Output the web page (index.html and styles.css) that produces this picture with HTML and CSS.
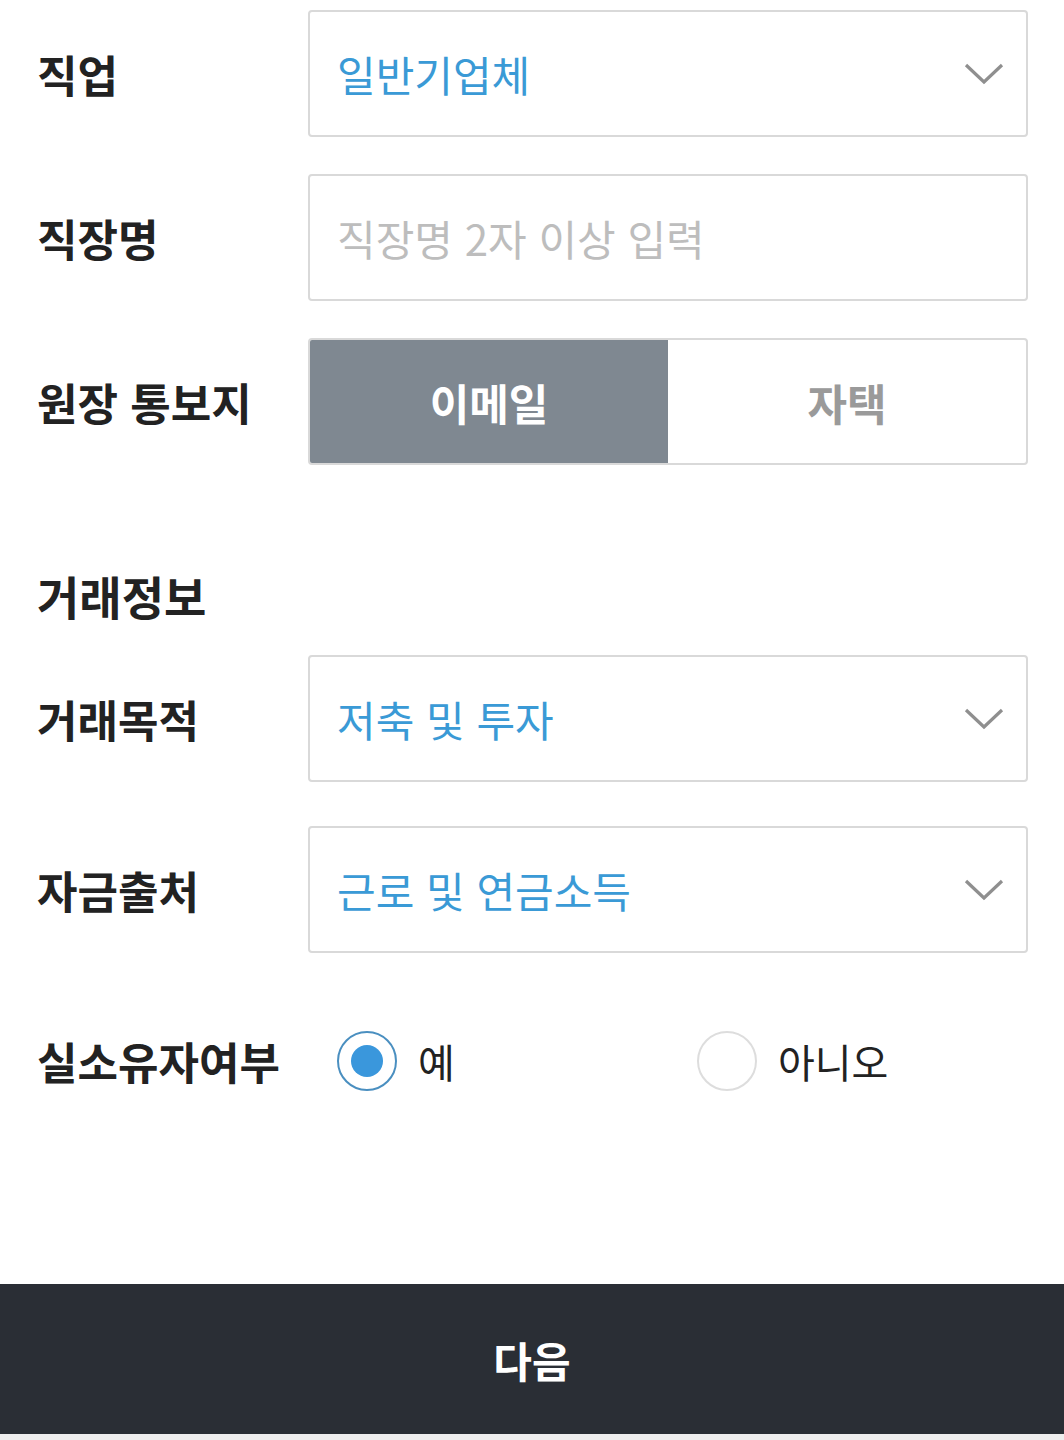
FILE: index.html
```html
<!DOCTYPE html>
<html lang="ko">
<head>
  <meta charset="UTF-8">
  <meta name="viewport" content="width=device-width, initial-scale=1.0">
  <title>거래정보</title>
  <link rel="stylesheet" href="styles.css">
</head>
<body>
  <div class="page">
    <div class="form">

      <div class="row">
        <div class="label">직업</div>
        <div class="field select">
          <span class="value">일반기업체</span>
          <svg class="chevron" width="40" height="24" viewBox="0 0 40 24"><path d="M2 3 L20 20 L38 3" fill="none" stroke="#8f8f8f" stroke-width="3.2"/></svg>
        </div>
      </div>

      <div class="row gap">
        <div class="label">직장명</div>
        <div class="field">
          <span class="placeholder">직장명 2자 이상 입력</span>
        </div>
      </div>

      <div class="row gap">
        <div class="label">원장 통보지</div>
        <div class="field toggle">
          <div class="opt on">이메일</div>
          <div class="opt">자택</div>
        </div>
      </div>

      <h2 class="section">거래정보</h2>

      <div class="row">
        <div class="label">거래목적</div>
        <div class="field select">
          <span class="value">저축 및 투자</span>
          <svg class="chevron" width="40" height="24" viewBox="0 0 40 24"><path d="M2 3 L20 20 L38 3" fill="none" stroke="#8f8f8f" stroke-width="3.2"/></svg>
        </div>
      </div>

      <div class="row gap2">
        <div class="label">자금출처</div>
        <div class="field select">
          <span class="value">근로 및 연금소득</span>
          <svg class="chevron" width="40" height="24" viewBox="0 0 40 24"><path d="M2 3 L20 20 L38 3" fill="none" stroke="#8f8f8f" stroke-width="3.2"/></svg>
        </div>
      </div>

      <div class="row radios">
        <div class="label">실소유자여부</div>
        <div class="choices">
          <div class="choice">
            <span class="radio checked"></span>
            <span>예</span>
          </div>
          <div class="choice">
            <span class="radio"></span>
            <span>아니오</span>
          </div>
        </div>
      </div>

    </div>

    <div class="next">다음</div>
    <div class="strip"></div>
  </div>
</body>
</html>
```

FILE: styles.css
```css
body
{
  margin:0;
  font-family:"Noto Sans CJK KR", "Noto Sans", sans-serif;
  background-color:#ffffff;
  color:#222222;
}

div.page
{
  height:1440px;
  display:flex;
  flex-direction:column;
}

div.form
{
  flex:1;
  padding:10px 36px 0 37px;
}

div.row
{
  display:flex;
  align-items:center;
}

div.row.gap
{
  margin-top:37px;
}

div.row.gap2
{
  margin-top:44px;
}

div.label
{
  width:271px;
  flex-shrink:0;
  font-size:44px;
  font-weight:700;
}

div.field
{
  flex:1;
  height:127px;
  box-sizing:border-box;
  border:2px solid #d9d9d9;
  border-radius:4px;
  display:flex;
  align-items:center;
  padding:0 22px 0 27px;
}

div.select
{
  justify-content:space-between;
}

span.value
{
  font-size:42px;
  color:#3a9ad6;
}

span.placeholder
{
  font-size:42px;
  color:#bdbdbd;
}

div.toggle
{
  padding:0;
  overflow:hidden;
}

div.opt
{
  flex:1;
  height:100%;
  display:flex;
  align-items:center;
  justify-content:center;
  font-size:43px;
  font-weight:700;
  color:#9a9a9a;
}

div.opt.on
{
  background-color:#7f8891;
  color:#ffffff;
}

h2.section
{
  margin:100px 0 30px 0;
  height:60px;
  line-height:60px;
  font-size:46px;
  font-weight:700;
}

div.radios
{
  margin-top:78px;
  height:60px;
}

div.choices
{
  flex:1;
  display:flex;
}

div.choice
{
  flex:1;
  display:flex;
  align-items:center;
  gap:21px;
  padding-left:29px;
  font-size:40px;
}

span.radio
{
  width:60px;
  height:60px;
  box-sizing:border-box;
  border:2px solid #dddddd;
  border-radius:50%;
  display:flex;
  align-items:center;
  justify-content:center;
}

span.radio.checked
{
  border-color:#4a8fc0;
}

span.radio.checked::after
{
  content:"";
  width:32px;
  height:32px;
  border-radius:50%;
  background-color:#3a97dc;
}

div.next
{
  height:150px;
  background-color:#2a2e35;
  color:#ffffff;
  font-size:42px;
  font-weight:700;
  display:flex;
  align-items:center;
  justify-content:center;
}

div.strip
{
  height:6px;
  background-color:#eeeeee;
}
```
